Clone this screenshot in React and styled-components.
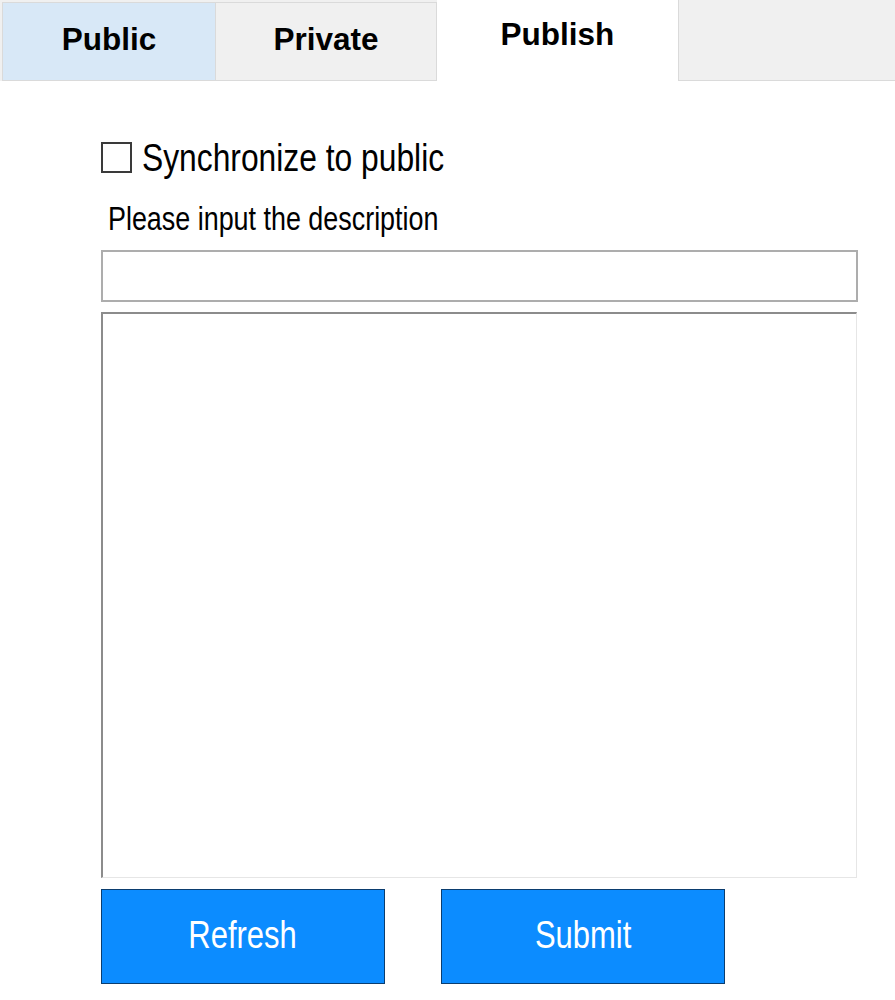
import React, { useState } from "react";
import styled, { createGlobalStyle } from "styled-components";

const Global = createGlobalStyle`
  html, body { margin: 0; padding: 0; background: #ffffff; }
  body { font-family: "Liberation Sans", Arial, sans-serif; }
  * { box-sizing: border-box; }
`;

const sans = `"Liberation Sans", Arial, sans-serif`;

const Page = styled.div`
  width: 895px;
  min-height: 1000px;
  background: #ffffff;
`;

const TabStrip = styled.div`
  display: flex;
  height: 81px;
  background: #f0f0f0;
  padding-left: 2px;
`;

const Tab = styled.div`
  width: ${(p) => p.$w}px;
  display: flex;
  justify-content: center;
  align-items: flex-start;
  font-family: ${sans};
  font-weight: 700;
  font-size: 31.5px;
  line-height: 1.15;
  color: #000;
  ${(p) =>
    p.$active
      ? `
    height: 81px;
    background: #ffffff;
    padding-top: 16px;
  `
      : `
    margin-top: 2px;
    height: 79px;
    background: ${p.$hover ? "#d8e8f7" : "#f0f0f0"};
    border: 1px solid #dadada;
    border-right: none;
    padding-top: 18px;
  `}
  &:nth-child(2) {
    border-right: 1px solid #dadada;
  }
`;

const TabFiller = styled.div`
  flex: 1;
  height: 81px;
  border-left: 1px solid #dadada;
  border-bottom: 1px solid #dadada;
`;

const Content = styled.div`
  padding: 57px 37px 16px 101px;
  display: flex;
  flex-direction: column;
`;

/* The reference uses a condensed face; Liberation Sans squeezed horizontally */
const Narrow = styled.span`
  display: inline-block;
  white-space: nowrap;
  transform: scaleX(0.815);
  transform-origin: ${(p) => (p.$center ? "center" : "left")} center;
`;

const CheckRow = styled.label`
  display: flex;
  align-items: center;
  gap: 10px;
  height: 39px;
  font-family: ${sans};
  font-size: 39px;
  line-height: 1;
  color: #000;
  cursor: pointer;
`;

const Box = styled.span`
  width: 31px;
  height: 31px;
  border: 2px solid #3a3a3a;
  background: #fff;
  flex: none;
  display: flex;
  align-items: center;
  justify-content: center;
  font-size: 24px;
`;

const Label = styled.div`
  margin-top: 25px;
  padding-left: 7px;
  font-family: ${sans};
  font-size: 33px;
  line-height: 1;
  color: #000;
`;

const TextInput = styled.input`
  margin-top: 15px;
  width: 757px;
  height: 52px;
  border: 2px solid #adadad;
  padding: 0 8px;
  font-family: ${sans};
  font-size: 26px;
  outline: none;
`;

const TextArea = styled.textarea`
  margin-top: 10px;
  width: 756px;
  height: 566px;
  border-style: solid;
  border-width: 2px 1px 1px 2px;
  border-color: #8c8c8c #e6e6e6 #e6e6e6 #8c8c8c;
  resize: none;
  outline: none;
  padding: 6px;
  font-family: ${sans};
  font-size: 24px;
`;

const ButtonRow = styled.div`
  margin-top: 11px;
  display: flex;
  gap: 56px;
`;

const Button = styled.button`
  width: 284px;
  height: 95px;
  background: #0c8cff;
  border: 1px solid #0b3d6f;
  color: #ffffff;
  font-family: ${sans};
  font-size: 38px;
  line-height: 1;
  padding: 0 0 3px;
  cursor: pointer;
  display: flex;
  align-items: center;
  justify-content: center;
`;

export default function App() {
  const [checked, setChecked] = useState(false);
  return (
    <Page>
      <Global />
      <TabStrip>
        <Tab $w={213} $hover>Public</Tab>
        <Tab $w={222}>Private</Tab>
        <Tab $w={241} $active>Publish</Tab>
        <TabFiller />
      </TabStrip>
      <Content>
        <CheckRow onClick={() => setChecked(!checked)}>
          <Box>{checked ? "✓" : ""}</Box>
          <Narrow>Synchronize to public</Narrow>
        </CheckRow>
        <Label>
          <Narrow>Please input the description</Narrow>
        </Label>
        <TextInput type="text" />
        <TextArea />
        <ButtonRow>
          <Button>
            <Narrow $center>Refresh</Narrow>
          </Button>
          <Button>
            <Narrow $center>Submit</Narrow>
          </Button>
        </ButtonRow>
      </Content>
    </Page>
  );
}
